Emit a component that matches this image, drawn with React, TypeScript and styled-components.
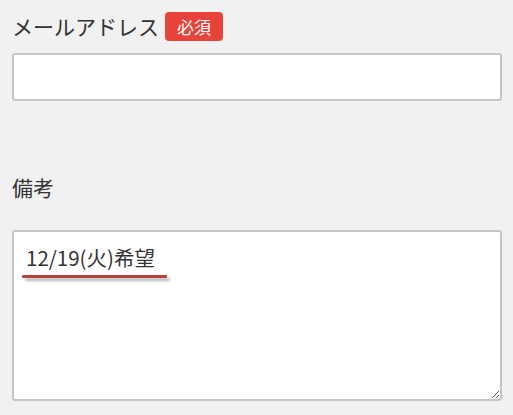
import React from "react";
import styled, { createGlobalStyle } from "styled-components";

const GlobalStyle = createGlobalStyle`
  html, body {
    margin: 0;
    padding: 0;
    background: #f1f1f1;
  }
  body {
    font-family: "Noto Sans CJK JP", "Noto Sans", sans-serif;
    color: #333;
  }
`;

const Page = styled.div`
  padding: 10px 12px 0 12px;
  width: 490px;
`;

const Field = styled.div`
  display: flex;
  flex-direction: column;
`;

const LabelRow = styled.div`
  display: flex;
  align-items: center;
  gap: 6px;
  height: 32px;
`;

const Label = styled.label`
  font-size: 21px;
  line-height: 32px;
  color: #333;
`;

const Required = styled.span`
  background: #e8433a;
  color: #fff;
  font-size: 17px;
  line-height: 29px;
  height: 29px;
  padding: 0 12px;
  border-radius: 4px;
  margin-top: 1px;
`;

const Input = styled.input`
  box-sizing: border-box;
  margin-top: 11px;
  width: 490px;
  height: 48px;
  border: 2px solid #c6c6c6;
  border-radius: 3px;
  background: #fff;
  font-size: 20px;
  font-family: inherit;
  outline: none;
`;

const Spacer = styled.div<{ h: number }>`
  height: ${(p) => p.h}px;
`;

const AreaWrap = styled.div`
  position: relative;
  margin-top: 27px;
`;

const TextArea = styled.textarea`
  box-sizing: border-box;
  display: block;
  width: 490px;
  height: 171px;
  border: 2px solid #c6c6c6;
  border-radius: 3px;
  background: #fff;
  font-size: 20.5px;
  font-family: inherit;
  color: #333;
  padding: 10px 12px;
  line-height: 30px;
  resize: vertical;
  outline: none;
`;

const Mark = styled.div`
  position: absolute;
  left: 10px;
  top: 45px;
  width: 145px;
  height: 3px;
  background: #b5433a;
  border-radius: 1px;
  box-shadow: 3px 3px 3px rgba(0, 0, 0, 0.3);
`;

export default function App() {
  return (
    <>
      <GlobalStyle />
      <Page>
        <Field>
          <LabelRow>
            <Label>メールアドレス</Label>
            <Required>必須</Required>
          </LabelRow>
          <Input type="email" />
        </Field>
        <Spacer h={70} />
        <Field>
          <LabelRow>
            <Label>備考</Label>
          </LabelRow>
          <AreaWrap>
            <TextArea defaultValue="12/19(火)希望" />
            <Mark />
          </AreaWrap>
        </Field>
      </Page>
    </>
  );
}
